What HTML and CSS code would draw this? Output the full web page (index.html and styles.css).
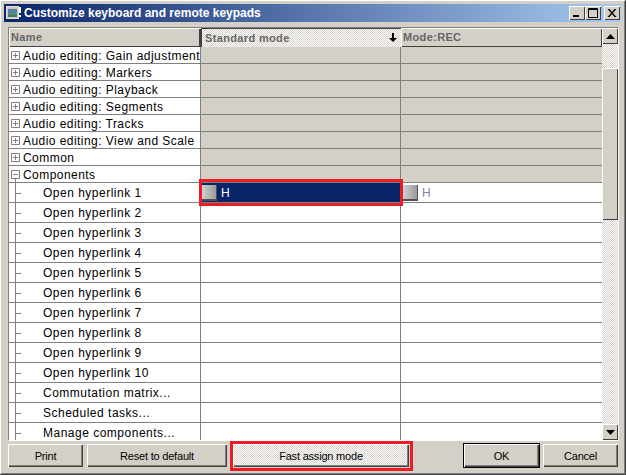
FILE: index.html
```html
<!DOCTYPE html>
<html lang="en">
<head>
<meta charset="utf-8">
<title>Customize keyboard and remote keypads</title>
<link rel="stylesheet" href="styles.css">
</head>
<body>
<div class="window">
  <div class="titlebar">
    <svg class="app-icon" width="15" height="14" viewBox="0 0 15 14"><rect x="0" y="0" width="13" height="13" fill="#e4e2dc"/><rect x="1" y="1" width="11" height="11" fill="#c8c8c8"/><rect x="2" y="3" width="9" height="8" fill="#4f8a88"/><rect x="2" y="3" width="9" height="3" fill="#5a7fa0"/><rect x="2" y="9" width="9" height="2" fill="#3f7f5a"/><rect x="13" y="1" width="2" height="6" fill="#fff"/><rect x="13" y="9" width="2" height="2" fill="#fff"/></svg>
    <span class="title-text">Customize keyboard and remote keypads</span>
    <div class="title-buttons">
      <span class="cap-btn"><svg width="16" height="14" viewBox="0 0 16 14"><rect x="4" y="9" width="6" height="2" fill="#000"/></svg></span>
      <span class="cap-btn"><svg width="16" height="14" viewBox="0 0 16 14"><path d="M3.5 2.5h9v9h-9z M3 3.5h10" fill="none" stroke="#000"/></svg></span>
      <span class="cap-btn cap-close"><svg width="16" height="14" viewBox="0 0 16 14"><path d="M4 3l7 8M5 3l7 8M11 3l-7 8M12 3l-7 8" stroke="#000" fill="none"/></svg></span>
    </div>
  </div>
  <div class="grid-box">
    <div class="table">
      <div class="head">
        <div class="hcell hname">Name</div>
        <div class="hcell hstd">Standard mode<svg class="sort" width="8" height="9" viewBox="0 0 8 9"><path d="M3 0h2v5h3L4 9 0 5h3z" fill="#000"/></svg></div>
        <div class="hcell hrec">Mode:REC</div>
      </div>
      <div class="row group"><div class="cell name"><svg class="exp" width="9" height="9" viewBox="0 0 9 9"><path d="M.5.5h8v8h-8zM2 4.5h5M4.5 2v5" fill="#fff" stroke="#808080"/></svg>Audio editing: Gain adjustment</div><div class="cell gray"></div><div class="cell gray last"></div></div>
      <div class="row group"><div class="cell name"><svg class="exp" width="9" height="9" viewBox="0 0 9 9"><path d="M.5.5h8v8h-8zM2 4.5h5M4.5 2v5" fill="#fff" stroke="#808080"/></svg>Audio editing: Markers</div><div class="cell gray"></div><div class="cell gray last"></div></div>
      <div class="row group"><div class="cell name"><svg class="exp" width="9" height="9" viewBox="0 0 9 9"><path d="M.5.5h8v8h-8zM2 4.5h5M4.5 2v5" fill="#fff" stroke="#808080"/></svg>Audio editing: Playback</div><div class="cell gray"></div><div class="cell gray last"></div></div>
      <div class="row group"><div class="cell name"><svg class="exp" width="9" height="9" viewBox="0 0 9 9"><path d="M.5.5h8v8h-8zM2 4.5h5M4.5 2v5" fill="#fff" stroke="#808080"/></svg>Audio editing: Segments</div><div class="cell gray"></div><div class="cell gray last"></div></div>
      <div class="row group"><div class="cell name"><svg class="exp" width="9" height="9" viewBox="0 0 9 9"><path d="M.5.5h8v8h-8zM2 4.5h5M4.5 2v5" fill="#fff" stroke="#808080"/></svg>Audio editing: Tracks</div><div class="cell gray"></div><div class="cell gray last"></div></div>
      <div class="row group"><div class="cell name"><svg class="exp" width="9" height="9" viewBox="0 0 9 9"><path d="M.5.5h8v8h-8zM2 4.5h5M4.5 2v5" fill="#fff" stroke="#808080"/></svg>Audio editing: View and Scale</div><div class="cell gray"></div><div class="cell gray last"></div></div>
      <div class="row group"><div class="cell name"><svg class="exp" width="9" height="9" viewBox="0 0 9 9"><path d="M.5.5h8v8h-8zM2 4.5h5M4.5 2v5" fill="#fff" stroke="#808080"/></svg>Common</div><div class="cell gray"></div><div class="cell gray last"></div></div>
      <div class="row group"><div class="cell name open"><svg class="exp" width="9" height="9" viewBox="0 0 9 9"><path d="M.5.5h8v8h-8zM2 4.5h5" fill="#fff" stroke="#808080"/></svg>Components</div><div class="cell gray"></div><div class="cell gray last"></div></div>
      <div class="row item sel-row">
        <div class="cell name child">Open hyperlink 1</div>
        <div class="cell selected"><span class="key"></span><span>H</span><span class="red-box"></span></div>
        <div class="cell last inherited"><span class="key"></span><span>H</span></div>
      </div>
      <div class="row item"><div class="cell name child">Open hyperlink 2</div><div class="cell"></div><div class="cell last"></div></div>
      <div class="row item"><div class="cell name child">Open hyperlink 3</div><div class="cell"></div><div class="cell last"></div></div>
      <div class="row item"><div class="cell name child">Open hyperlink 4</div><div class="cell"></div><div class="cell last"></div></div>
      <div class="row item"><div class="cell name child">Open hyperlink 5</div><div class="cell"></div><div class="cell last"></div></div>
      <div class="row item"><div class="cell name child">Open hyperlink 6</div><div class="cell"></div><div class="cell last"></div></div>
      <div class="row item"><div class="cell name child">Open hyperlink 7</div><div class="cell"></div><div class="cell last"></div></div>
      <div class="row item"><div class="cell name child">Open hyperlink 8</div><div class="cell"></div><div class="cell last"></div></div>
      <div class="row item"><div class="cell name child">Open hyperlink 9</div><div class="cell"></div><div class="cell last"></div></div>
      <div class="row item"><div class="cell name child">Open hyperlink 10</div><div class="cell"></div><div class="cell last"></div></div>
      <div class="row item"><div class="cell name child">Commutation matrix...</div><div class="cell"></div><div class="cell last"></div></div>
      <div class="row item"><div class="cell name child">Scheduled tasks...</div><div class="cell"></div><div class="cell last"></div></div>
      <div class="row item"><div class="cell name child">Manage components...</div><div class="cell"></div><div class="cell last"></div></div>
    </div>
    <div class="scrollbar">
      <span class="sb-btn"><svg width="9" height="5" viewBox="0 0 9 5"><path d="M4.5 0L9 5H0z" fill="#000"/></svg></span>
      <span class="sb-track short"></span>
      <span class="sb-thumb"></span>
      <span class="sb-track"></span>
      <span class="sb-btn"><svg width="9" height="5" viewBox="0 0 9 5"><path d="M0 0h9L4.5 5z" fill="#000"/></svg></span>
    </div>
  </div>
  <div class="footer">
    <button class="btn print">Print</button>
    <button class="btn reset">Reset to default</button>
    <button class="btn fast">Fast assign mode<span class="red-box"></span></button>
    <span class="spacer"></span>
    <button class="btn ok">OK</button>
    <button class="btn cancel">Cancel</button>
  </div>
</div>
</body>
</html>
```
FILE: styles.css
```css
* { box-sizing: border-box; }
html, body { margin: 0; padding: 0; }
body { width: 626px; height: 475px; overflow: hidden; background: #d4d0c8; }
.window {
  width: 626px; height: 475px; display: flex; flex-direction: column;
  padding: 4px; background: #d4d0c8;
  border-right: 1px solid #404040; border-bottom: 1px solid #404040;
  box-shadow: inset 1px 1px 0 #fff, inset -1px -1px 0 #808080;
}
.titlebar {
  height: 18px; display: flex; align-items: center; padding: 0 1px 0 0; flex: none;
  background: linear-gradient(90deg, #0a246a, #a6caf0);
}
.app-icon { flex: none; margin-left: 2px; }
.title-text {
  margin-left: 3px; margin-top: -1px; color: #fff; font: bold 12px "Liberation Sans", Arial, sans-serif;
  white-space: nowrap;
}
.title-buttons { margin-left: auto; display: flex; }
.cap-btn {
  width: 16px; height: 14px; background: #d4d0c8; display: block; line-height: 0;
  box-shadow: inset 1px 1px 0 #fff, inset -1px -1px 0 #404040;
}
.cap-close { margin-left: 3px; }
.grid-box {
  margin: 5px 3px 0 4px; height: 413px; flex: none; display: flex;
  border-top: 1px solid #808080; border-left: 1px solid #808080;
  box-shadow: 1px 1px 0 #fff;
}
.table { width: 593px; flex: none; overflow: hidden; background: #fff; }
.head { display: grid; grid-template-columns: 192px 200px 201px; height: 19px; }
.hcell {
  font: bold 11px "Liberation Sans", Arial, sans-serif; letter-spacing: 0.35px; color: #666;
  background: #d4d0c8; padding: 3px 0 0 2px; white-space: nowrap; position: relative;
  box-shadow: inset 1px 1px 0 #fff, inset -1px -1px 0 #404040;
}
.hname { box-shadow: inset 1px 1px 0 #fff, inset -2px -1px 0 #404040; }
.hstd {
  display: flex; align-items: flex-start; justify-content: space-between; padding: 4px 4px 0 4px;
  background: repeating-conic-gradient(#d4d0c8 0 25%, #fff 0 50%) 0 0 / 2px 2px;
  box-shadow: inset 1px 1px 0 #404040;
}
.sort { margin-top: 1px; }
.row { display: grid; grid-template-columns: 192px 200px 201px; }
.group { height: 17px; }
.item { height: 20px; }
.cell {
  border-right: 1px solid #808080; border-bottom: 1px solid #808080;
  font: 12px "Liberation Sans", Arial, sans-serif; color: #000; white-space: nowrap; overflow: hidden;
  display: flex; align-items: center; position: relative;
}
.cell.last { border-right: none; }
.gray { background: #d4d0c8; }
.name { padding: 1px 0 0 2px; letter-spacing: 0.45px; }
.exp { flex: none; margin: -1px 3px 0 0; }
.open {
  background: linear-gradient(#808080, #808080) 6px 12px / 1px 5px no-repeat;
}
.child {
  padding: 1px 0 0 34px; letter-spacing: 0.5px;
  background:
    linear-gradient(#808080, #808080) 6px 0 / 1px 100% no-repeat,
    linear-gradient(#808080, #808080) 7px 10px / 5px 1px no-repeat;
}
.selected { background: #0a246a; color: #fff; padding-left: 1px; }
.inherited { color: #8080a8; padding-left: 2px; }
.key {
  width: 15px; height: 16px; margin-right: 4px; flex: none;
  background: linear-gradient(90deg, #d0d0d0, #989898);
  box-shadow: inset -1px -2px 0 #505050;
}
.red-box {
  position: absolute; left: -2px; top: -4px; width: 204px; height: 27px;
  border: 3px solid #ed1c24; pointer-events: none; z-index: 2;
}
.sel-row .selected { overflow: visible; }
.scrollbar { width: 16px; flex: none; display: flex; flex-direction: column; }
.sb-btn {
  height: 16px; flex: none; display: flex; align-items: center; justify-content: center; background: #d4d0c8;
  box-shadow: inset 1px 1px 0 #fff, inset -1px -1px 0 #404040;
}
.sb-track { flex: 1; background: repeating-conic-gradient(#d4d0c8 0 25%, #fff 0 50%) 0 0 / 2px 2px; }
.sb-track.short { flex: none; height: 24px; }
.sb-thumb {
  height: 152px; flex: none; background: #d4d0c8;
  box-shadow: inset 1px 1px 0 #fff, inset -1px -1px 0 #404040;
}
.footer { display: flex; margin: 4px 3px 0 4px; height: 23px; flex: none; align-items: flex-start; }
.btn {
  height: 23px; padding: 0; border: none; background: #d4d0c8; color: #000;
  font: 11px "Liberation Sans", Arial, sans-serif; letter-spacing: -0.2px; position: relative;
  box-shadow: inset 1px 1px 0 #fff, inset -1px -1px 0 #404040, inset -2px -2px 0 #808080;
}
.print { width: 75px; }
.reset { width: 140px; margin-left: 4px; }
.fast {
  width: 176px; margin-left: 6px;
  background: repeating-conic-gradient(#d4d0c8 0 25%, #fff 0 50%) 0 0 / 2px 2px;
}
.fast .red-box { left: -3px; top: -3px; width: 183px; height: 30px; }
.spacer { flex: 1; }
.ok { width: 75px; box-shadow: 0 0 0 1px #000, inset 1px 1px 0 #fff, inset -1px -1px 0 #404040, inset -2px -2px 0 #808080; }
.cancel { width: 75px; margin-left: 4px; }
```
